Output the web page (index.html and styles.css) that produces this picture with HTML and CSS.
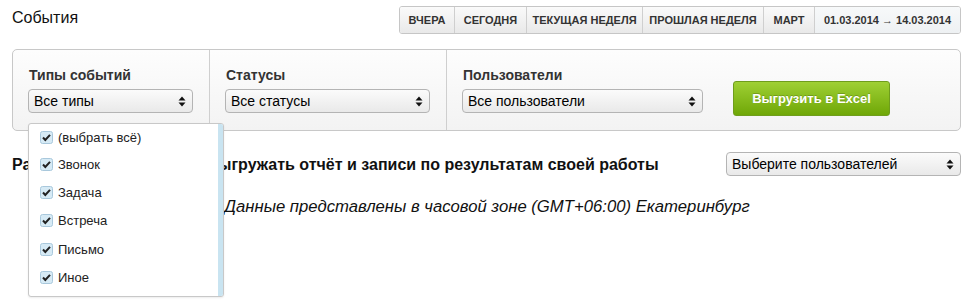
FILE: index.html
```html
<!DOCTYPE html>
<html lang="ru">
<head>
<meta charset="utf-8">
<title>События</title>
<link rel="stylesheet" href="styles.css">
</head>
<body>
<div class="page">
  <div class="header">
    <h1 class="title">События</h1>
    <div class="tabs">
      <span class="tab t1">Вчера</span>
      <span class="tab t2">Сегодня</span>
      <span class="tab t3">Текущая неделя</span>
      <span class="tab t4">Прошлая неделя</span>
      <span class="tab t5">Март</span>
      <span class="tab t6 active">01.03.2014 → 14.03.2014</span>
    </div>
  </div>

  <div class="panel">
    <div class="section s1">
      <div class="label">Типы событий</div>
      <div class="select sel1">Все типы<span class="arrows"><svg width="8" height="11" viewBox="0 0 8 11"><path d="M4 0.5 L7.5 4.5 L0.5 4.5 Z M4 10.5 L7.5 6.5 L0.5 6.5 Z" fill="#111"/></svg></span></div>
    </div>
    <div class="section s2">
      <div class="label">Статусы</div>
      <div class="select sel2">Все статусы<span class="arrows"><svg width="8" height="11" viewBox="0 0 8 11"><path d="M4 0.5 L7.5 4.5 L0.5 4.5 Z M4 10.5 L7.5 6.5 L0.5 6.5 Z" fill="#111"/></svg></span></div>
    </div>
    <div class="section s3">
      <div class="field">
        <div class="label">Пользователи</div>
        <div class="select sel3">Все пользователи<span class="arrows"><svg width="8" height="11" viewBox="0 0 8 11"><path d="M4 0.5 L7.5 4.5 L0.5 4.5 Z M4 10.5 L7.5 6.5 L0.5 6.5 Z" fill="#111"/></svg></span></div>
      </div>
      <button class="btn">Выгрузить в Excel</button>
    </div>
  </div>

  <div class="perm-row">
    <div class="perm-title">Разрешить менеджерам выгружать отчёт и записи по результатам своей работы</div>
    <div class="select sel4">Выберите пользователей<span class="arrows"><svg width="8" height="11" viewBox="0 0 8 11"><path d="M4 0.5 L7.5 4.5 L0.5 4.5 Z M4 10.5 L7.5 6.5 L0.5 6.5 Z" fill="#111"/></svg></span></div>
  </div>

  <div class="tz">Данные представлены в часовой зоне (GMT+06:00) Екатеринбург</div>

  <div class="dropdown">
    <ul class="opts">
      <li class="opt first"><span class="cb"><svg width="13" height="13" viewBox="0 0 13 13"><rect x="0.5" y="0.5" width="12" height="12" rx="2" fill="#d6eaf5" stroke="#a9c8dc"/><path d="M3 6.5 L5.3 9 L10 3.8" fill="none" stroke="#222" stroke-width="2"/></svg></span>(выбрать всё)</li>
      <li class="opt"><span class="cb"><svg width="13" height="13" viewBox="0 0 13 13"><rect x="0.5" y="0.5" width="12" height="12" rx="2" fill="#d6eaf5" stroke="#a9c8dc"/><path d="M3 6.5 L5.3 9 L10 3.8" fill="none" stroke="#222" stroke-width="2"/></svg></span>Звонок</li>
      <li class="opt"><span class="cb"><svg width="13" height="13" viewBox="0 0 13 13"><rect x="0.5" y="0.5" width="12" height="12" rx="2" fill="#d6eaf5" stroke="#a9c8dc"/><path d="M3 6.5 L5.3 9 L10 3.8" fill="none" stroke="#222" stroke-width="2"/></svg></span>Задача</li>
      <li class="opt"><span class="cb"><svg width="13" height="13" viewBox="0 0 13 13"><rect x="0.5" y="0.5" width="12" height="12" rx="2" fill="#d6eaf5" stroke="#a9c8dc"/><path d="M3 6.5 L5.3 9 L10 3.8" fill="none" stroke="#222" stroke-width="2"/></svg></span>Встреча</li>
      <li class="opt"><span class="cb"><svg width="13" height="13" viewBox="0 0 13 13"><rect x="0.5" y="0.5" width="12" height="12" rx="2" fill="#d6eaf5" stroke="#a9c8dc"/><path d="M3 6.5 L5.3 9 L10 3.8" fill="none" stroke="#222" stroke-width="2"/></svg></span>Письмо</li>
      <li class="opt"><span class="cb"><svg width="13" height="13" viewBox="0 0 13 13"><rect x="0.5" y="0.5" width="12" height="12" rx="2" fill="#d6eaf5" stroke="#a9c8dc"/><path d="M3 6.5 L5.3 9 L10 3.8" fill="none" stroke="#222" stroke-width="2"/></svg></span>Иное</li>
    </ul>
    <div class="scrollbar"></div>
  </div>
</div>
</body>
</html>
```

FILE: styles.css
```css
* { box-sizing: border-box; }
html, body { margin: 0; padding: 0; background: #fff; }
body {
  font-family: "Liberation Sans", Arial, sans-serif;
  color: #000;
  width: 974px;
  height: 306px;
  overflow: hidden;
}
.page {
  position: relative;
  padding: 0 12px 0 12px;
}
.header {
  display: flex;
  justify-content: space-between;
  align-items: flex-start;
  height: 49px;
}
.title {
  margin: 9px 0 0 0;
  font-size: 16px;
  font-weight: normal;
  line-height: 18px;
  color: #111;
}
.tabs {
  display: flex;
  margin-top: 6px;
  margin-right: 1px;
  height: 28px;
  border: 1px solid #c6c6c6;
  border-radius: 3px;
  overflow: hidden;
}
.tab {
  display: flex;
  align-items: center;
  justify-content: center;
  font-size: 11px;
  font-weight: bold;
  text-transform: uppercase;
  color: #333;
  background: linear-gradient(#fafafa, #e9e9e9);
  border-left: 1px solid #cfcfcf;
  height: 100%;
}
.tab.t1 { border-left: none; width: 54px; }
.tab.t2 { width: 72px; }
.tab.t3 { width: 116px; }
.tab.t4 { width: 121px; }
.tab.t5 { width: 51px; }
.tab.t6 { width: 146px; }
.tab.active {
  background: linear-gradient(#f7f9fa, #eef1f3);
}

.panel {
  display: flex;
  height: 82px;
  margin-right: 1px;
  border: 1px solid #c8c8c8;
  border-radius: 5px;
  background: linear-gradient(#fdfdfd, #f3f3f3);
}
.section {
  padding: 17px 15px 0 15px;
}
.s1 { width: 197px; border-right: 1px solid #cfcfcf; }
.s2 { width: 237px; border-right: 1px solid #cfcfcf; }
.s3 { flex: 1; display: flex; align-items: flex-start; gap: 30px; }
.label {
  font-size: 14px;
  font-weight: bold;
  color: #333;
  line-height: 16px;
  margin: 0 0 6px 1px;
}
.select {
  position: relative;
  height: 24px;
  border: 1px solid #b4b4b4;
  border-radius: 4px;
  background: linear-gradient(#fbfbfb, #e9e9e9);
  font-size: 14px;
  line-height: 22px;
  padding-left: 5px;
  color: #000;
}
.arrows {
  position: absolute;
  right: 6px;
  top: 6px;
  line-height: 0;
}
.sel1 { width: 165px; }
.sel2 { width: 205px; }
.sel3 { width: 241px; }
.btn {
  margin-top: 14px;
  width: 157px;
  height: 35px;
  border: 1px solid #6f9d1c;
  border-radius: 3px;
  background: linear-gradient(#9fd034, #6fa707);
  color: #fff;
  font-family: "Liberation Sans", Arial, sans-serif;
  font-size: 13px;
  font-weight: bold;
  text-shadow: 0 -1px 0 rgba(0,0,0,0.2);
}

.perm-row {
  display: flex;
  justify-content: space-between;
  align-items: center;
  margin-top: 21px;
  margin-right: 1px;
}
.perm-title {
  font-size: 16px;
  font-weight: bold;
  color: #111;
  padding-top: 2px;
}
.sel4 { width: 235px; }

.tz {
  margin-top: 21px;
  text-align: center;
  font-size: 16.7px;
  font-style: italic;
  color: #111;
}

.dropdown {
  position: absolute;
  left: 28px;
  top: 123px;
  width: 196px;
  height: 174px;
  border: 1px solid #c8c8c8;
  border-radius: 3px;
  background: #fff;
  box-shadow: 0 1px 2px rgba(0,0,0,0.08);
  overflow: hidden;
}
.opts {
  list-style: none;
  margin: 0;
  padding: 0;
}
.opt {
  display: flex;
  align-items: center;
  height: 28.3px;
  padding-left: 11px;
  font-size: 13px;
  color: #222;
}
.opt.first { height: 26px; }
.cb {
  display: inline-flex;
  margin-right: 5px;
}
.scrollbar {
  position: absolute;
  right: 0;
  top: 0;
  bottom: 0;
  width: 5px;
  background: #c9e4f1;
}
```
